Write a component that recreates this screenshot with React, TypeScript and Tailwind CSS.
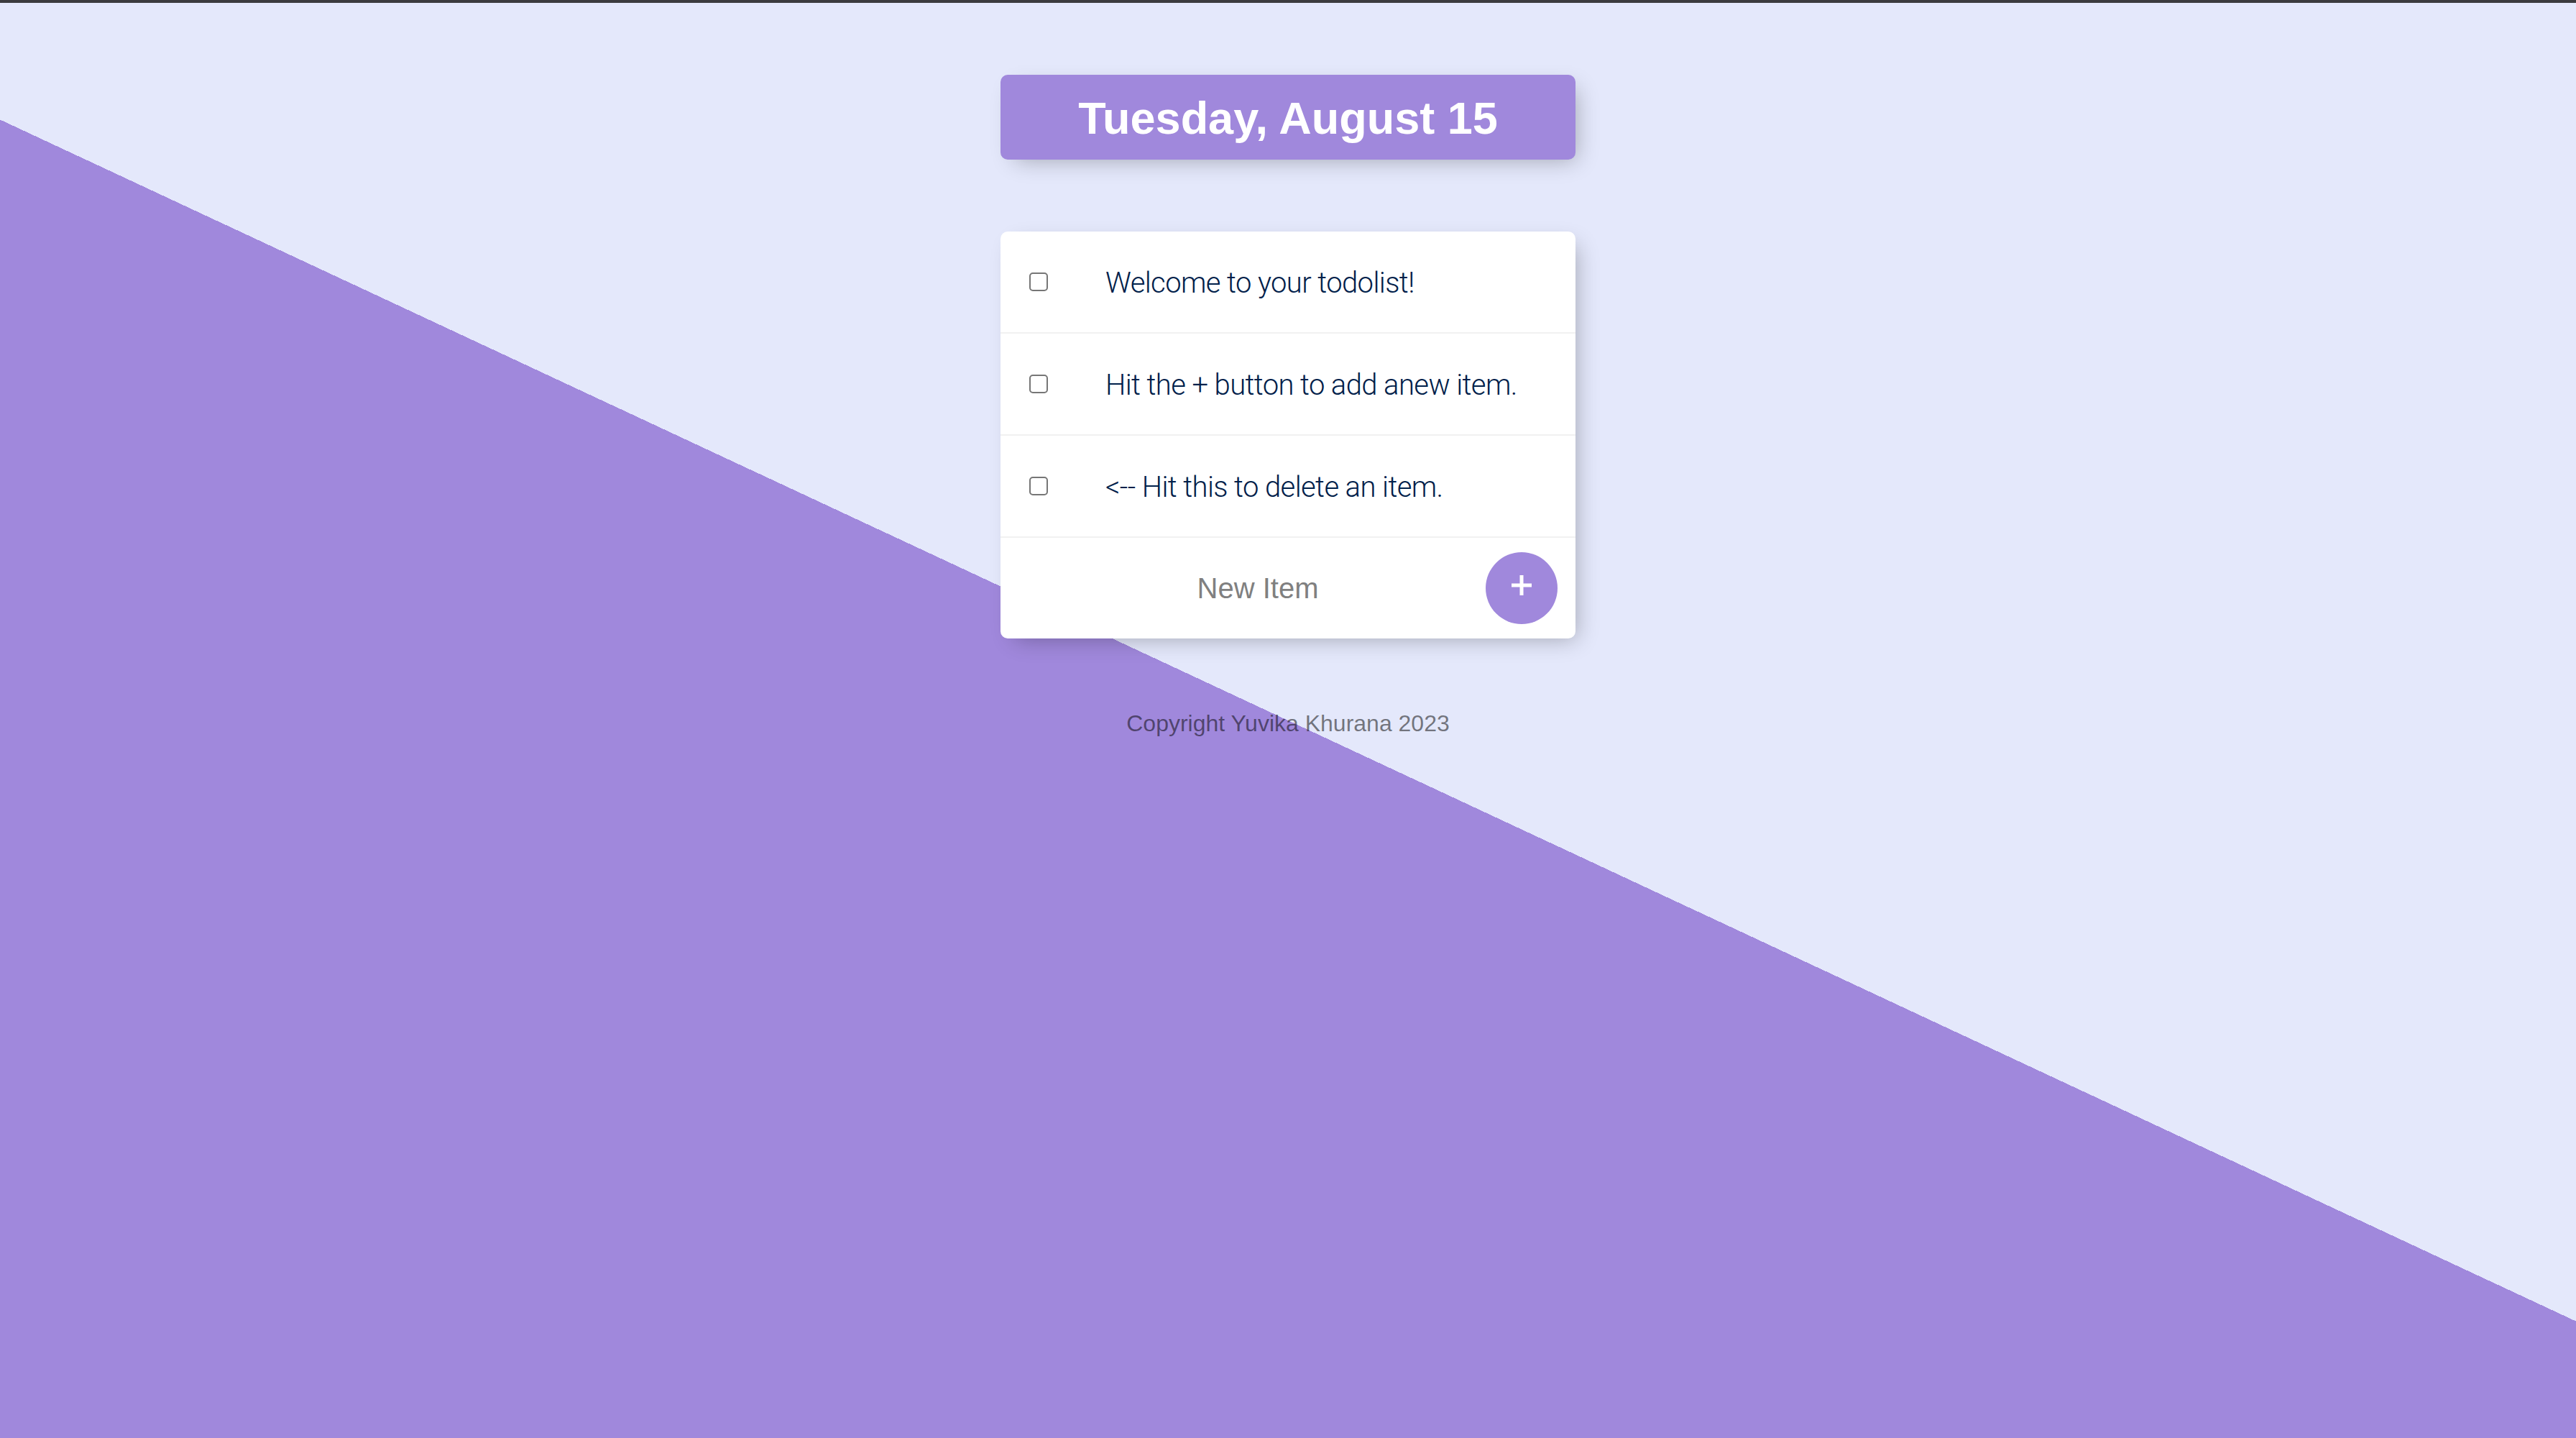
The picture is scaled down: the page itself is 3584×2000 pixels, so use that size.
import React from "react";

const items = [
  "Welcome to your todolist!",
  "Hit the + button to add anew item.",
  "<-- Hit this to delete an item.",
];

export default function App() {
  return (
    <div className="w-[3584px] h-[2000px] flex flex-col overflow-hidden font-['Liberation_Sans',Arial,sans-serif]">
      <div className="h-[4px] shrink-0 bg-[#3b3b3e]" />
      <div className="flex-1 flex flex-col items-center bg-[linear-gradient(25deg,#a088dc_50%,#e4e8fb_50%)]">
        <div className="mt-[100px] w-[800px] h-[118px] rounded-[10px] bg-[#a088dc] shadow-[10px_10px_30px_-10px_rgba(0,0,0,0.3)] flex items-center justify-center">
          <h1 className="text-white font-bold text-[63px] leading-none pt-[2px]">Tuesday, August 15</h1>
        </div>

        <div className="mt-[100px] w-[800px] rounded-[10px] bg-white shadow-[10px_10px_30px_-10px_rgba(0,0,0,0.3)] flex flex-col">
          {items.map((t) => (
            <div key={t} className="h-[142px] flex items-center border-b-2 border-[#f1f1f1]">
              <input
                type="checkbox"
                className="appearance-none ml-[40px] w-[26px] h-[26px] rounded-[5px] border-2 border-[#767676] bg-white shrink-0"
              />
              <p className="ml-[80px] pt-[3px] text-[40px] font-light tracking-[-0.6px] text-[#00204a] font-['Roboto','Liberation_Sans',sans-serif]">
                {t}
              </p>
            </div>
          ))}
          <div className="h-[140px] flex items-center">
            <input
              type="text"
              placeholder="New Item"
              className="ml-[45px] w-[626px] h-[120px] text-center text-[40px] bg-transparent outline-none placeholder:text-[#808080] font-['Liberation_Sans',Arial,sans-serif]"
            />
            <button
              aria-label="+"
              className="ml-[4px] w-[100px] h-[100px] rounded-full bg-[#a088dc] flex items-center justify-center pb-[9px]"
            >
              <svg width="28" height="28" viewBox="0 0 28 28">
                <path d="M14 0V28M0 14H28" stroke="white" strokeWidth="5" />
              </svg>
            </button>
          </div>
        </div>

        <footer className="mt-[100px] text-[32px] leading-[37px] text-[rgba(0,0,0,0.5)]">
          Copyright Yuvika Khurana 2023
        </footer>
      </div>
    </div>
  );
}
